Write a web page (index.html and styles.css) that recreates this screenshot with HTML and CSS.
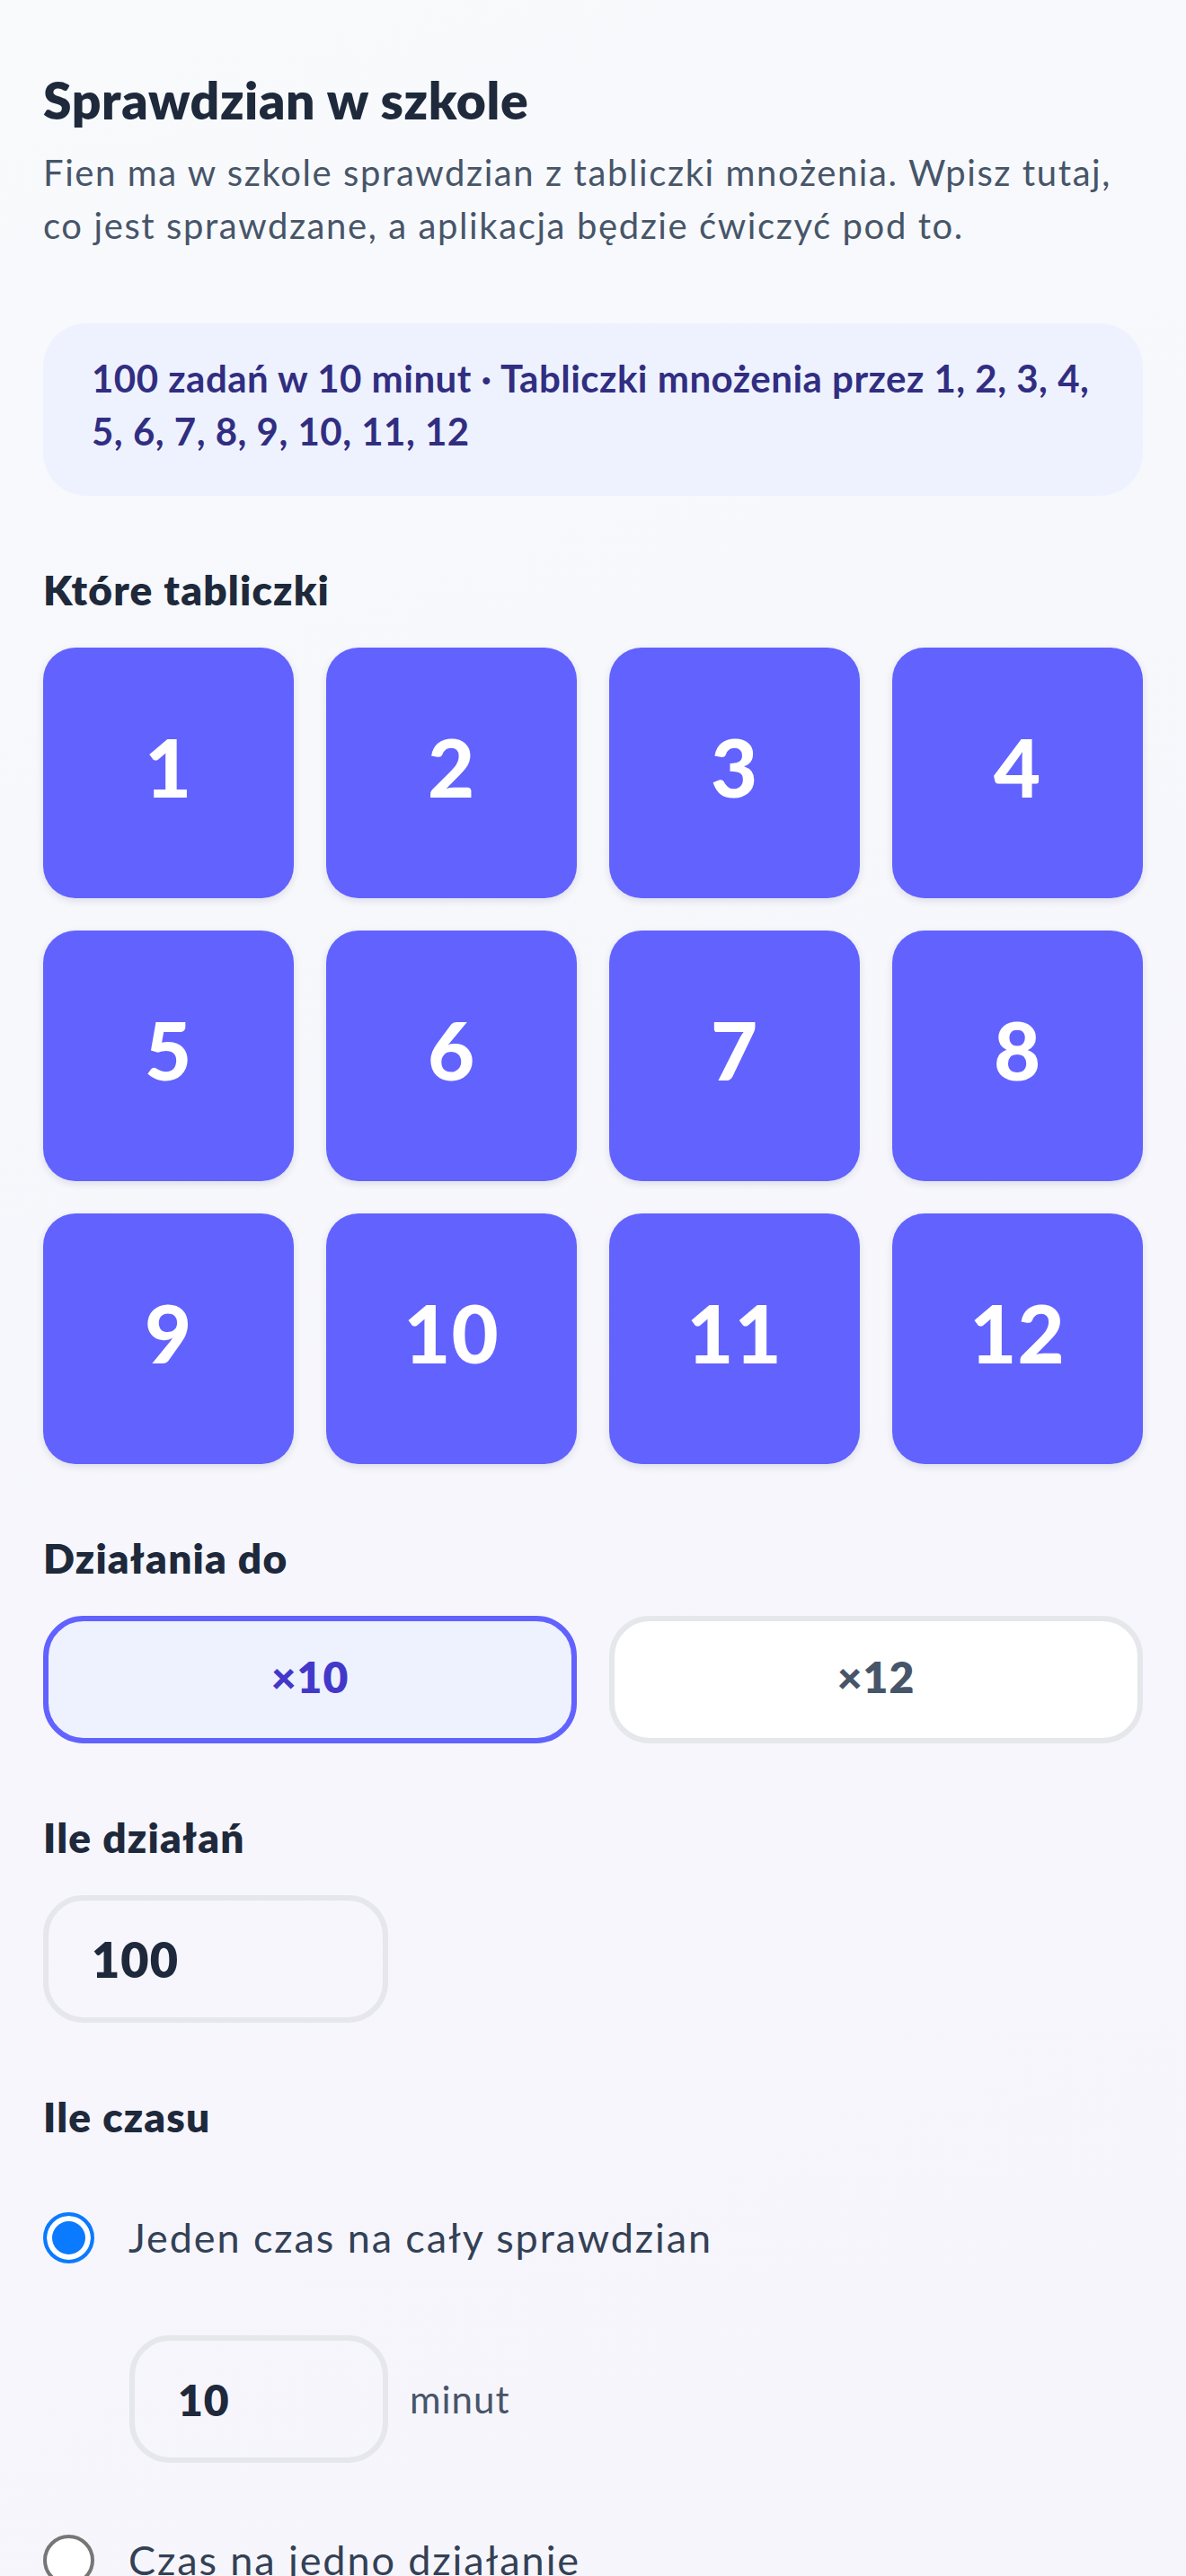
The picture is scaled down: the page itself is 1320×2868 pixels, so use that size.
FILE: index.html
```html
<!DOCTYPE html>
<html lang="pl">
<head>
    <meta charset="UTF-8">
    <meta name="viewport" content="width=device-width, initial-scale=1.0">
    <title>Sprawdzian w szkole</title>
    <link rel="stylesheet" href="styles.css">
</head>
<body>
    <main class="page">
        <h1 class="page-title">Sprawdzian w szkole</h1>
        <p class="intro">Fien ma w szkole sprawdzian z tabliczki mnożenia. Wpisz tutaj, co jest sprawdzane, a aplikacja będzie ćwiczyć pod to.</p>

        <div class="summary">100 zadań w 10 minut · Tabliczki mnożenia przez 1, 2, 3, 4, 5, 6, 7, 8, 9, 10, 11, 12</div>

        <section class="field">
            <h2 class="field-label">Które tabliczki</h2>
            <div class="table-grid">
                <button class="table-tile selected">1</button>
                <button class="table-tile selected">2</button>
                <button class="table-tile selected">3</button>
                <button class="table-tile selected">4</button>
                <button class="table-tile selected">5</button>
                <button class="table-tile selected">6</button>
                <button class="table-tile selected">7</button>
                <button class="table-tile selected">8</button>
                <button class="table-tile selected">9</button>
                <button class="table-tile selected">10</button>
                <button class="table-tile selected">11</button>
                <button class="table-tile selected">12</button>
            </div>
        </section>

        <section class="field">
            <h2 class="field-label">Działania do</h2>
            <div class="toggle-row">
                <button class="toggle active">×10</button>
                <button class="toggle">×12</button>
            </div>
        </section>

        <section class="field">
            <h2 class="field-label">Ile działań</h2>
            <input type="text" class="num-input" value="100">
        </section>

        <section class="field">
            <h2 class="field-label">Ile czasu</h2>
            <div class="time-options">
                <label class="radio-option">
                    <input type="radio" name="time-mode" checked>
                    <span>Jeden czas na cały sprawdzian</span>
                </label>
                <div class="minutes-row">
                    <input type="text" class="num-input small" value="10">
                    <span class="unit">minut</span>
                </div>
                <label class="radio-option">
                    <input type="radio" name="time-mode">
                    <span>Czas na jedno działanie</span>
                </label>
            </div>
        </section>
    </main>
</body>
</html>
```

FILE: styles.css
```css
/* General Styling */
html, body {
    height: 100%;
}

body {
    margin: 0;
    overflow: hidden;
    font-family: 'Lato', 'Noto Sans', sans-serif;
    color: #1e293b;
    background: linear-gradient(160deg, #f8fafc 0%, #f6f6fc 60%, #f7f5fc 100%);
}

.page {
    padding: 76px 48px 0;
}

/* Header */
.page-title {
    margin: 0 0 17px;
    font-size: 57px;
    line-height: 70px;
    font-weight: 800;
    letter-spacing: 0.6px;
    color: #1e293b;
}

.intro {
    margin: 0;
    font-size: 40px;
    line-height: 59px;
    letter-spacing: 1.6px;
    color: #475569;
}

/* Summary box */
.summary {
    margin-top: 79px;
    padding: 32px 54px 42px;
    background: #eef2ff;
    border-radius: 48px;
    color: #312e81;
    font-size: 42px;
    line-height: 59px;
    font-weight: 700;
    letter-spacing: 0.5px;
}

/* Fields */
.field {
    margin-top: 75px;
}

.field-label {
    margin: 0 0 34px;
    font-size: 46px;
    line-height: 60px;
    font-weight: 800;
    letter-spacing: 1.2px;
    color: #1e293b;
}

button, input {
    font-family: inherit;
}

/* Table tiles */
.table-grid {
    display: grid;
    grid-template-columns: repeat(4, 1fr);
    gap: 36px;
}

.table-tile {
    aspect-ratio: 1;
    padding: 0 0 16px;
    border: none;
    border-radius: 36px;
    background: #e5e7eb;
    color: #1e293b;
    font-size: 90px;
    font-weight: 900;
    letter-spacing: 1px;
    cursor: pointer;
}

.table-tile.selected {
    background: #6262ff;
    color: white;
    box-shadow: 0 3px 8px rgba(30, 30, 80, 0.12);
}

/* Range toggle */
.toggle-row {
    display: grid;
    grid-template-columns: 1fr 1fr;
    gap: 36px;
}

.toggle {
    height: 142px;
    padding: 0 0 8px;
    border: 6px solid #e5e7eb;
    border-radius: 45px;
    background: white;
    color: #475569;
    font-size: 48px;
    font-weight: 800;
    letter-spacing: 1px;
    cursor: pointer;
}

.toggle.active {
    border-color: #6262ff;
    background: #eef2ff;
    color: #4338ca;
}

/* Number inputs */
.num-input {
    box-sizing: border-box;
    width: 384px;
    height: 142px;
    padding: 0 48px;
    border: 6px solid #e5e7eb;
    border-radius: 45px;
    background: transparent;
    color: #1e293b;
    font-size: 54px;
    font-weight: 800;
    letter-spacing: 1px;
    outline: none;
}

.num-input.small {
    width: 288px;
    font-size: 48px;
}

/* Time options */
.time-options {
    display: flex;
    flex-direction: column;
    gap: 76px;
    padding-top: 38px;
}

.radio-option {
    display: flex;
    align-items: center;
    gap: 38px;
    font-size: 45px;
    line-height: 65px;
    letter-spacing: 1.9px;
    color: #334155;
    cursor: pointer;
}

.radio-option input {
    appearance: none;
    flex: none;
    width: 57px;
    height: 57px;
    margin: 0;
    border: 4px solid #767676;
    border-radius: 50%;
    background: white;
}

.radio-option input:checked {
    border: 4px solid #0a7aff;
    background: #0a7aff;
    box-shadow: inset 0 0 0 6px white;
}

.minutes-row {
    display: flex;
    align-items: center;
    gap: 24px;
    padding-left: 96px;
}

.unit {
    font-size: 42px;
    letter-spacing: 1px;
    color: #475569;
}
```
